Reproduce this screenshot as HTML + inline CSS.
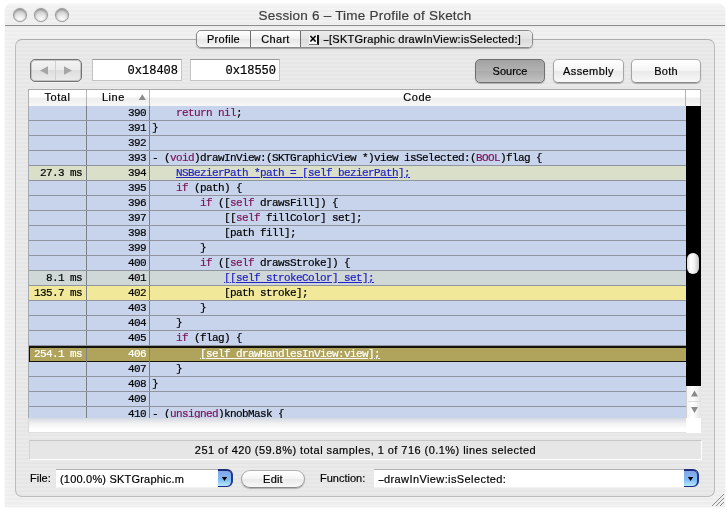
<!DOCTYPE html>
<html>
<head>
<meta charset="utf-8">
<title>Session 6 – Time Profile of Sketch</title>
<style>
html,body{margin:0;padding:0;background:#fff;}
body{width:727px;height:512px;overflow:hidden;position:relative;font-family:"Liberation Sans",sans-serif;color:#000;}
.abs{position:absolute;}
.stripes{background-image:repeating-linear-gradient(to bottom,#f1f1f1 0,#f1f1f1 2px,#ededed 2px,#ededed 4px);}
#win{will-change:transform;-webkit-text-stroke:.18px currentColor;position:absolute;left:5px;top:4px;width:720px;height:503px;border-radius:7px 7px 0 0;overflow:hidden;box-shadow:0 0 1px rgba(0,0,0,.25);}
#titlebar{position:absolute;left:0;top:0;width:720px;height:21px;border-bottom:1px solid #8c8c8c;background:linear-gradient(rgba(255,255,255,.3),rgba(255,255,255,0) 40%);}
#title{position:absolute;left:0;width:720px;top:3px;text-align:center;font-size:13.5px;line-height:18px;color:#3c3c3c;letter-spacing:.22px;}
.tl{position:absolute;top:4px;width:14px;height:14px;border-radius:50%;border:1px solid #9a9a9a;box-sizing:border-box;background:radial-gradient(ellipse 60% 50% at 50% 90%,#ffffff 0,#ececec 60%,rgba(236,236,236,0) 100%),linear-gradient(#c4c4c4,#dedede 45%,#e8e8e8);box-shadow:inset 0 1px 2px rgba(0,0,0,.35),0 0 1px rgba(0,0,0,.25);}
#box{position:absolute;left:10px;top:35px;width:700px;height:458px;box-sizing:border-box;border:1px solid #bcbcbc;border-top-color:#adadad;border-radius:7px;background-image:repeating-linear-gradient(to bottom,#eaeaea 0,#eaeaea 2px,#e6e6e6 2px,#e6e6e6 4px);}
#tabs{position:absolute;left:191px;top:26px;width:337px;height:18px;box-sizing:border-box;border:1px solid #8a8a8a;border-radius:5px;background:linear-gradient(#ffffff,#f0f0f0 50%,#e6e6e6 50%,#f6f6f6);font-size:11px;overflow:hidden;box-shadow:0 1px 1px rgba(0,0,0,.3);}
#tabs div{position:absolute;top:0;height:16px;line-height:16px;text-align:center;}
.btn{position:absolute;box-sizing:border-box;border:1px solid #a4a4a4;border-top-color:#b0b0b0;border-bottom-color:#8a8a8a;border-radius:5px;background:linear-gradient(#ffffff,#f4f4f4 50%,#e9e9e9 50%,#f8f8f8);font-size:11px;text-align:center;box-shadow:0 1px 1px rgba(0,0,0,.25);}
.field{position:absolute;box-sizing:border-box;background:#fff;border:1px solid #c4c4c4;border-top-color:#9a9a9a;font-family:"Liberation Mono",monospace;font-size:12px;text-align:right;-webkit-text-stroke:.22px #000;}
#table{position:absolute;left:23px;top:85px;width:673px;height:344px;background:#fff;overflow:hidden;}
#thead{position:absolute;left:0;top:0;width:673px;height:17px;box-sizing:border-box;border-top:1px solid #a8a8a8;border-left:1px solid #b0b0b0;background:linear-gradient(#ffffff,#ffffff 45%,#ededed 50%,#f7f7f7 100%);font-size:11px;}
#thead div{position:absolute;top:0;height:16px;line-height:15px;text-align:center;box-sizing:border-box;}
#rows{position:absolute;left:0;top:17px;width:658px;height:312px;overflow:hidden;background:#c8d4ec;border-left:1px solid #a8aab2;box-sizing:border-box;}
.row{position:absolute;left:0;width:658px;height:15px;box-sizing:border-box;border-bottom:1px solid #8f949f;font-family:"Liberation Mono",monospace;font-size:11px;letter-spacing:-0.6px;line-height:15px;white-space:pre;color:#000;-webkit-text-stroke:.2px currentColor;}
.row div{position:absolute;top:0;height:14px;box-sizing:border-box;}
.c1{left:0;width:58px;text-align:right;padding-right:4px;border-right:1px solid #7d7f86;}
.c2{left:58px;width:63px;text-align:right;padding-right:3px;border-right:1px solid #7d7f86;}
.c3{left:121px;width:537px;padding-left:2px;}
.b{background:#c8d4ec;}
.g1{background:#dadfc9;}
.g2{background:#d0d8d7;}
.y{background:#f1e89a;}
.sel{background:#b0a45c;color:#fff;line-height:13px;border-bottom-color:#14140c;border-top:2px solid #14140c;height:16px;box-shadow:inset 1px 0 0 #14140c,inset -1px 0 0 #14140c;}
.hy{display:inline-block;width:6px;transform:scaleX(1.7);transform-origin:0 50%;}
.k{color:#7a1258;}
.a{color:#2222c8;text-decoration:underline;}
.sel .a{color:#fff;}
.cb{box-sizing:border-box;border:1px solid #1e2e7c;border-top-width:2px;border-right:2px solid #26388e;border-left:none;border-radius:0 6px 6px 0;background:linear-gradient(#7ea6e6 0,#86b4f0 40%,#7cbaf6 55%,#b6e8ff 100%);}
.cb:after{content:"";position:absolute;left:3.5px;top:5.5px;width:6px;height:4.5px;background:#000;clip-path:polygon(0 0,100% 0,50% 100%);}
</style>
</head>
<body>
<div id="win" class="stripes">
  <div id="titlebar"></div>
  <div class="tl" style="left:8px"></div>
  <div class="tl" style="left:29px"></div>
  <div class="tl" style="left:50px"></div>
  <div id="title">Session 6 – Time Profile of Sketch</div>

  <div id="box"></div>

  <div id="tabs">
    <div style="left:0;width:53px;border-right:1px solid #6e6e6e;letter-spacing:.25px;">Profile</div>
    <div style="left:54px;width:49px;border-right:1px solid #6e6e6e;letter-spacing:.3px;">Chart</div>
    <div style="left:104px;width:232px;background:linear-gradient(#ececec,#e2e2e2 50%,#dadada 50%,#e8e8e8);text-align:left;"><span class="abs" style="left:8px;top:4px;width:8px;height:9px;background:#f6f6f6;border-right:2px solid #111;border-bottom:1px solid #777;font-size:12px;line-height:9px;font-weight:bold;text-align:center;letter-spacing:0;">×</span><span class="abs" style="left:22px;top:0;letter-spacing:.27px;white-space:pre;"><span class="hy">-</span>[SKTGraphic drawInView:isSelected:]</span></div>
  </div>

  <!-- nav button -->
  <div class="btn" style="left:25px;top:55px;width:52px;height:23px;border-radius:5px;border:1px solid #727272;box-shadow:inset 0 0 0 1px rgba(120,120,120,.35),0 1px 0 rgba(255,255,255,.6);background:linear-gradient(#f3f3f3,#ebebeb 50%,#dedede 50%,#ececec);">
    <div class="abs" style="left:24px;top:1px;width:1px;height:19px;background:#d0d0d0;"></div>
    <svg class="abs" style="left:0;top:0" width="50" height="21" viewBox="0 0 50 21"><path d="M9 10.5 L17 6.3 L17 14.7 Z" fill="#a6a6a6"/><path d="M41 10.5 L33 6.3 L33 14.7 Z" fill="#a6a6a6"/></svg>
  </div>
  <div class="field" style="left:87px;top:55px;width:90px;height:22px;line-height:22px;padding-right:3px;">0x18408</div>
  <div class="field" style="left:185px;top:55px;width:90px;height:22px;line-height:22px;padding-right:3px;">0x18550</div>

  <div class="btn" style="left:470px;top:55px;width:70px;height:24px;line-height:23px;background:linear-gradient(#a2a2a2,#b2b2b2 50%,#aaaaaa 50%,#c2c2c2);border-color:#707070;">Source</div>
  <div class="btn" style="left:548px;top:55px;width:71px;height:24px;line-height:23px;letter-spacing:.4px;">Assembly</div>
  <div class="btn" style="left:626px;top:55px;width:70px;height:24px;line-height:23px;letter-spacing:.2px;">Both</div>

  <div id="table">
    <div id="thead">
      <div style="left:0;width:58px;border-right:1px solid #b4b4b4;letter-spacing:.6px;">Total</div>
      <div style="left:58px;width:63px;border-right:1px solid #b4b4b4;text-align:left;padding-left:15px;letter-spacing:.5px;">Line</div>
      <svg class="abs" style="left:109px;top:4px" width="9" height="8"><path d="M0.7 6 L4.3 0.3 L7.9 6 Z" fill="#8c8c8c"/></svg>
      <div style="left:121px;width:536px;border-right:1px solid #b4b4b4;letter-spacing:.5px;">Code</div>
      <div style="left:657px;width:15px;border-right:1px solid #b4b4b4;"></div>
    </div>
    <div id="rows">
<div class="row b" style="top:0px"><div class="c1"></div><div class="c2">390</div><div class="c3">    <span class="k">return</span> <span class="k">nil</span>;</div></div>
<div class="row b" style="top:15px"><div class="c1"></div><div class="c2">391</div><div class="c3">}</div></div>
<div class="row b" style="top:30px"><div class="c1"></div><div class="c2">392</div><div class="c3"></div></div>
<div class="row b" style="top:45px"><div class="c1"></div><div class="c2">393</div><div class="c3">- (<span class="k">void</span>)drawInView:(SKTGraphicView *)view isSelected:(<span class="k">BOOL</span>)flag {</div></div>
<div class="row g1" style="top:60px"><div class="c1">27.3 ms</div><div class="c2">394</div><div class="c3">    <span class="a">NSBezierPath *path = [self bezierPath];</span></div></div>
<div class="row b" style="top:75px"><div class="c1"></div><div class="c2">395</div><div class="c3">    <span class="k">if</span> (path) {</div></div>
<div class="row b" style="top:90px"><div class="c1"></div><div class="c2">396</div><div class="c3">        <span class="k">if</span> ([<span class="k">self</span> drawsFill]) {</div></div>
<div class="row b" style="top:105px"><div class="c1"></div><div class="c2">397</div><div class="c3">            [[<span class="k">self</span> fillColor] set];</div></div>
<div class="row b" style="top:120px"><div class="c1"></div><div class="c2">398</div><div class="c3">            [path fill];</div></div>
<div class="row b" style="top:135px"><div class="c1"></div><div class="c2">399</div><div class="c3">        }</div></div>
<div class="row b" style="top:150px"><div class="c1"></div><div class="c2">400</div><div class="c3">        <span class="k">if</span> ([<span class="k">self</span> drawsStroke]) {</div></div>
<div class="row g2" style="top:165px"><div class="c1">8.1 ms</div><div class="c2">401</div><div class="c3">            <span class="a">[[self strokeColor] set];</span></div></div>
<div class="row y" style="top:180px"><div class="c1">135.7 ms</div><div class="c2">402</div><div class="c3">            [path stroke];</div></div>
<div class="row b" style="top:195px"><div class="c1"></div><div class="c2">403</div><div class="c3">        }</div></div>
<div class="row b" style="top:210px"><div class="c1"></div><div class="c2">404</div><div class="c3">    }</div></div>
<div class="row b" style="top:225px"><div class="c1"></div><div class="c2">405</div><div class="c3">    <span class="k">if</span> (flag) {</div></div>
<div class="row sel" style="top:240px"><div class="c1">254.1 ms</div><div class="c2">406</div><div class="c3">        <span class="a">[self drawHandlesInView:view];</span></div></div>
<div class="row b" style="top:256px"><div class="c1"></div><div class="c2">407</div><div class="c3">    }</div></div>
<div class="row b" style="top:271px"><div class="c1"></div><div class="c2">408</div><div class="c3">}</div></div>
<div class="row b" style="top:286px"><div class="c1"></div><div class="c2">409</div><div class="c3"></div></div>
<div class="row b" style="top:301px"><div class="c1"></div><div class="c2">410</div><div class="c3">- (<span class="k">unsigned</span>)knobMask {</div></div>
    </div>
    <!-- vertical scroller -->
    <div class="abs" style="left:658px;top:17px;width:15px;height:280px;background:#000;"></div>
    <div class="abs" style="left:659px;top:164px;width:12px;height:21px;border-radius:6px;background:linear-gradient(to right,#d8d8d8,#ffffff 30%,#f4f4f4 60%,#c4c4c4);"></div>
    <div class="abs" style="left:658px;top:297px;width:15px;height:32px;background:linear-gradient(to right,#f4f4f4,#ffffff 40%,#e4e4e4);border-left:1px solid #d0d0d0;box-sizing:border-box;">
      <svg class="abs" style="left:0;top:0" width="15" height="32"><path d="M4 10.5 L7.5 4.5 L11 10.5 Z" fill="#8a8a8a"/><path d="M4 21 L7.5 27 L11 21 Z" fill="#8a8a8a"/><path d="M1 15.5 H14" stroke="#dcdcdc" stroke-width="1"/></svg>
    </div>
    <!-- horizontal scroller -->
    <div class="abs" style="left:0;top:329px;width:658px;height:15px;box-sizing:border-box;border-bottom:1px solid #e0e0e0;border-left:1px solid #d8d8d8;background:linear-gradient(#d4d8e0,#f2f2f2 40%,#ffffff 80%);"></div>
    <div class="abs" style="left:658px;top:329px;width:15px;height:15px;background:#fff;"></div>
  </div>

  <!-- status -->
  <div class="abs" style="left:24px;top:436px;width:673px;height:20px;box-sizing:border-box;background:#e6e6e6;border:1px solid #fff;border-top-color:#c6c6c6;border-left-color:#d4d4d4;font-size:11px;line-height:19px;text-align:center;letter-spacing:.45px;">251 of 420 (59.8%) total samples, 1 of 716 (0.1%) lines selected</div>

  <!-- bottom -->
  <div class="abs" style="left:25px;top:467px;font-size:11px;line-height:14px;">File:</div>
  <div class="abs combo" style="left:51px;top:465px;width:163px;height:19px;background:#fff;border-top:1px solid #b0b0b0;border-bottom:1px solid #f2f2f2;box-sizing:border-box;font-size:11px;line-height:18px;padding-left:4px;letter-spacing:.2px;">(100.0%) SKTGraphic.m</div>
  <div class="abs cb" style="left:213px;top:465px;width:15px;height:18px;"></div>
  <div class="btn" style="left:236px;top:466px;width:64px;height:18px;border-radius:9px;line-height:17px;letter-spacing:.2px;">Edit</div>
  <div class="abs" style="left:315px;top:467px;font-size:11px;line-height:14px;">Function:</div>
  <div class="abs combo" style="left:369px;top:465px;width:311px;height:19px;background:#fff;border-top:1px solid #b0b0b0;border-bottom:1px solid #f2f2f2;box-sizing:border-box;font-size:11px;line-height:18px;padding-left:4px;letter-spacing:.4px;"><span class="hy">-</span>drawInView:isSelected:</div>
  <div class="abs cb" style="left:679px;top:465px;width:15px;height:18px;"></div>

  <!-- resize grip -->
  <svg class="abs" style="left:705px;top:488px" width="15" height="15"><path d="M14 2 L2 14 M14 6 L6 14 M14 10 L10 14" stroke="#8a8a8a" stroke-width="1"/></svg>
</div>
</body>
</html>
